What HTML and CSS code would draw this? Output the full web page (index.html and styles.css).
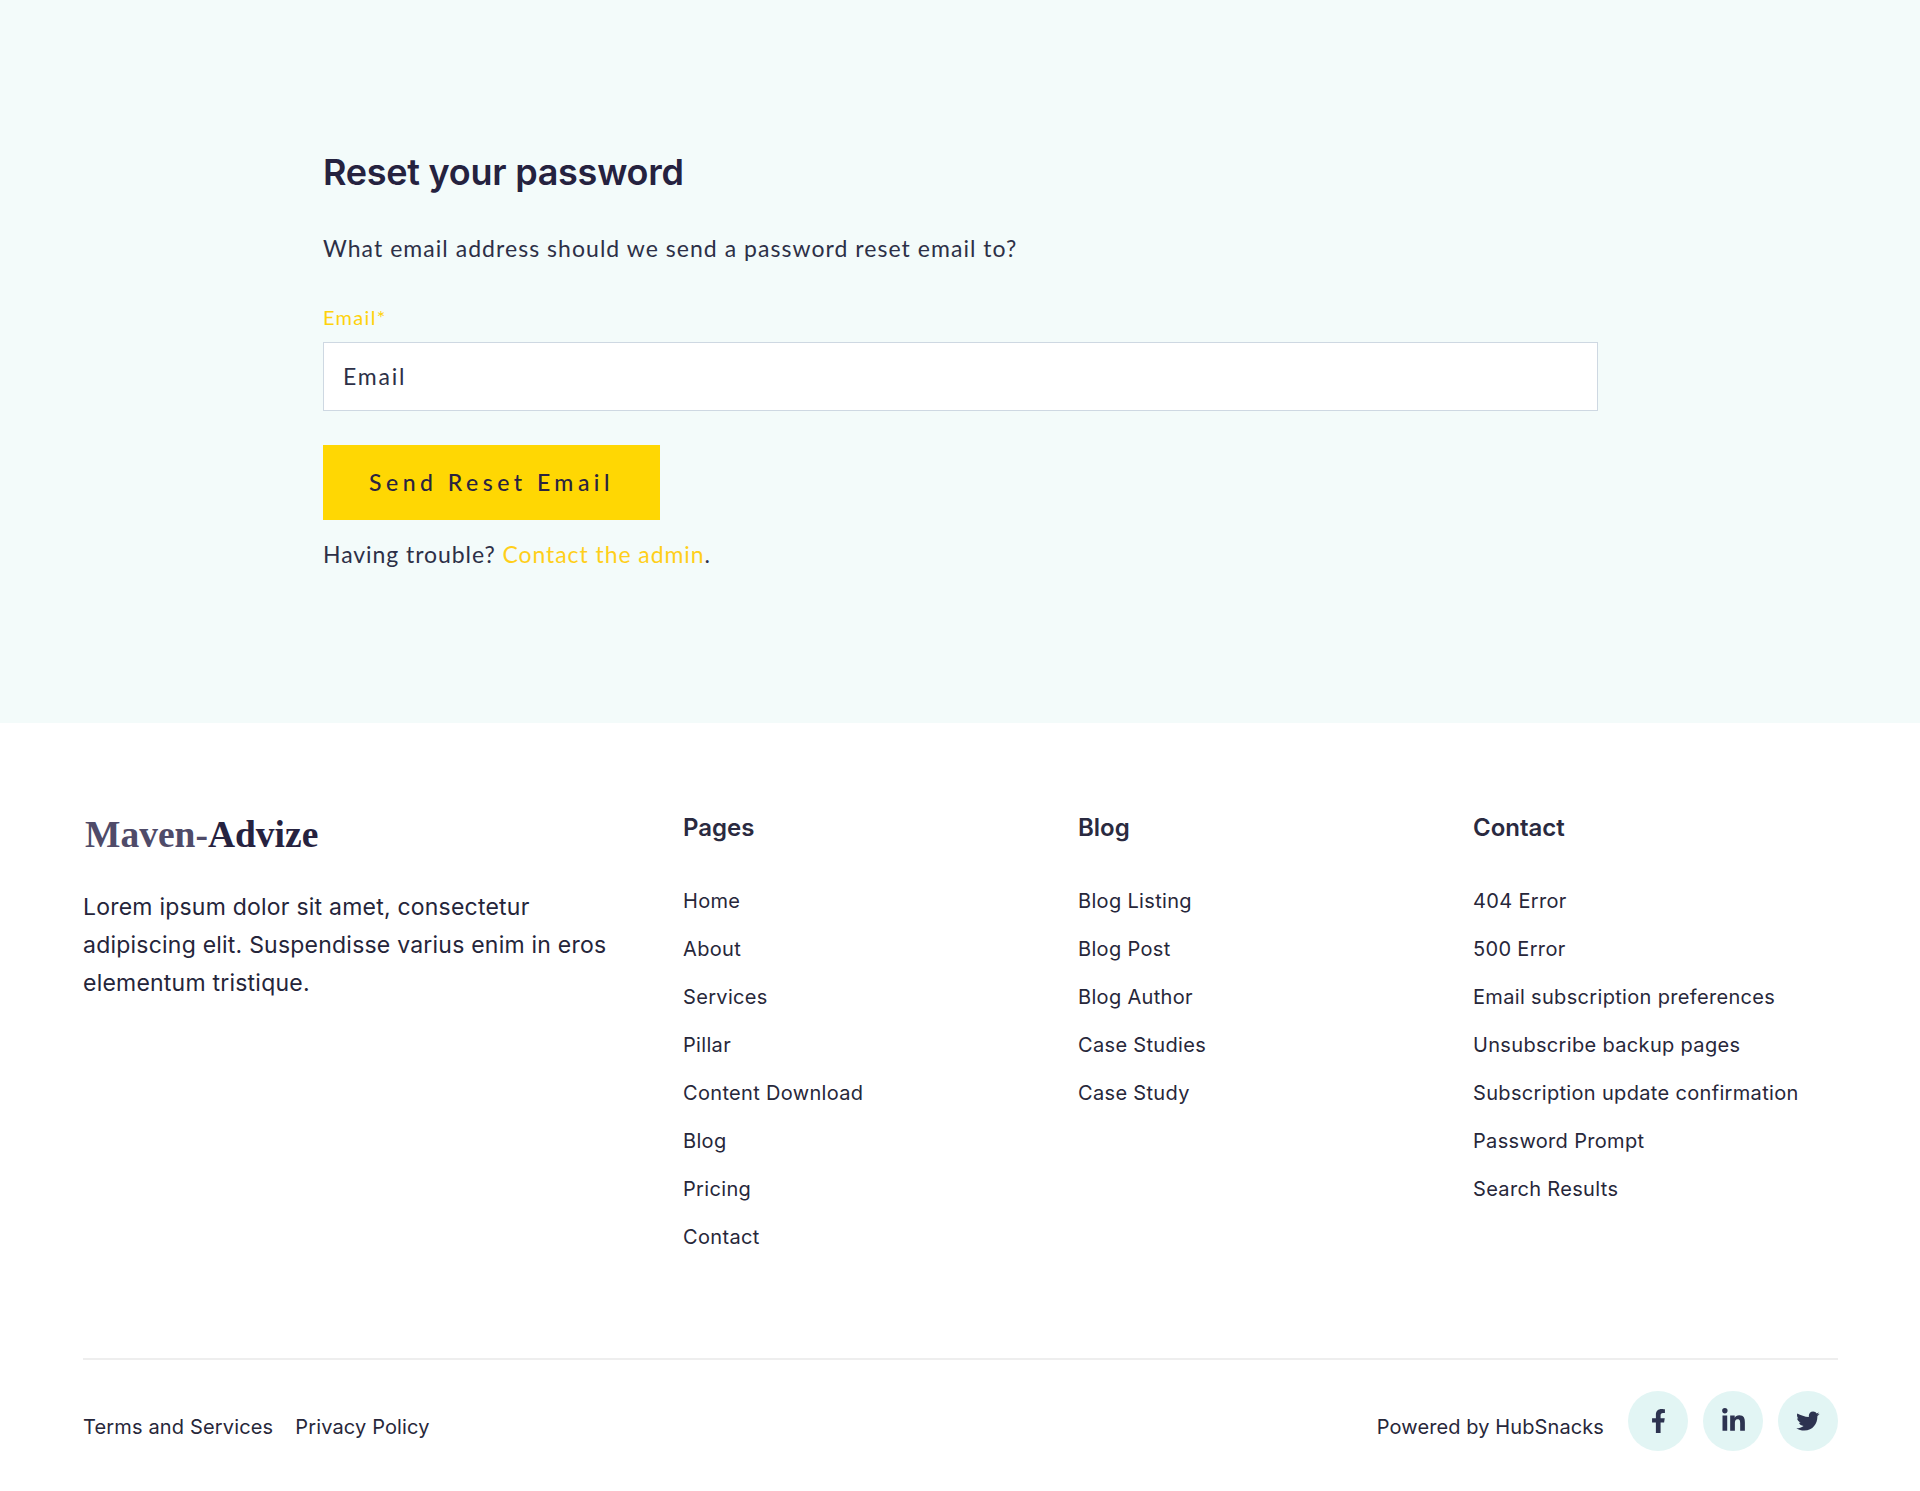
FILE: index.html
```html
<!DOCTYPE html>
<html lang="en">
<head>
<meta charset="utf-8">
<title>Reset your password</title>
<link rel="stylesheet" href="styles.css">
</head>
<body>
<main class="hero">
  <div class="hero-inner">
    <h1 class="title">Reset your password</h1>
    <p class="lead">What email address should we send a password reset email to?</p>
    <form class="form">
      <label class="label" for="email">Email*</label>
      <input class="input" id="email" type="email" placeholder="Email">
      <button class="button" type="button">Send Reset Email</button>
    </form>
    <p class="trouble">Having trouble? <a class="admin" href="#">Contact the admin</a>.</p>
  </div>
</main>
<footer class="footer">
  <div class="footer-top">
    <div class="brand">
      <div class="logo"><span class="logo-light">Maven-</span>Advize</div>
      <p class="about">Lorem ipsum dolor sit amet, consectetur adipiscing elit. Suspendisse varius enim in eros elementum tristique.</p>
    </div>
    <nav class="col">
      <h2 class="col-title">Pages</h2>
      <a class="link" href="#">Home</a>
      <a class="link" href="#">About</a>
      <a class="link" href="#">Services</a>
      <a class="link" href="#">Pillar</a>
      <a class="link" href="#">Content Download</a>
      <a class="link" href="#">Blog</a>
      <a class="link" href="#">Pricing</a>
      <a class="link" href="#">Contact</a>
    </nav>
    <nav class="col">
      <h2 class="col-title">Blog</h2>
      <a class="link" href="#">Blog Listing</a>
      <a class="link" href="#">Blog Post</a>
      <a class="link" href="#">Blog Author</a>
      <a class="link" href="#">Case Studies</a>
      <a class="link" href="#">Case Study</a>
    </nav>
    <nav class="col">
      <h2 class="col-title">Contact</h2>
      <a class="link" href="#">404 Error</a>
      <a class="link" href="#">500 Error</a>
      <a class="link" href="#">Email subscription preferences</a>
      <a class="link" href="#">Unsubscribe backup pages</a>
      <a class="link" href="#">Subscription update confirmation</a>
      <a class="link" href="#">Password Prompt</a>
      <a class="link" href="#">Search Results</a>
    </nav>
  </div>
  <div class="footer-bottom">
    <div class="legal">
      <a class="legal-link" href="#">Terms and Services</a>
      <a class="legal-link" href="#">Privacy Policy</a>
    </div>
    <div class="social">
      <span class="powered">Powered by HubSnacks</span>
      <a class="circle" href="#" aria-label="Facebook">
        <svg class="icon icon-f" viewBox="0 0 320 512"><path d="M279.14 288l14.22-92.66h-88.91v-60.13c0-25.35 12.42-50.06 52.24-50.06h40.42V6.26S260.43 0 225.36 0c-73.22 0-121.08 44.38-121.08 124.72v70.62H22.89V288h81.39v224h100.17V288z"/></svg>
      </a>
      <a class="circle" href="#" aria-label="LinkedIn">
        <svg class="icon icon-in" viewBox="0 0 448 512"><path d="M100.28 448H7.4V148.9h92.88zM53.79 108.1C24.09 108.1 0 83.5 0 53.8a53.79 53.79 0 0 1 107.58 0c0 29.7-24.1 54.3-53.79 54.3zM447.9 448h-92.68V302.4c0-34.7-.7-79.2-48.29-79.2-48.29 0-55.69 37.7-55.69 76.7V448h-92.78V148.9h89.08v40.8h1.3c12.4-23.5 42.69-48.3 87.88-48.3 94 0 111.28 61.9 111.28 142.3V448z"/></svg>
      </a>
      <a class="circle" href="#" aria-label="Twitter">
        <svg class="icon icon-tw" viewBox="48 43 73 60"><path d="M120 51C117 52 115 53 113 53C115 52 117 49 118 47C116 48 113 49 111 50C109 47 105 44 100 44C92 44 87 50 87 57L87 61C75 60 62 55 52 50C50 54 51 60 55 66L51 65C52 71 56 75 62 78L57 78C59 83 64 87 71 88C65 92 57 95 49 95C56 100 64 102 73 102C100 102 113 80 113 60L113 58C116 56 118 54 120 51Z"/></svg>
      </a>
    </div>
  </div>
</footer>
</body>
</html>
```

FILE: styles.css
```css
* { box-sizing: border-box; }
html, body { margin: 0; padding: 0; }
body { background: #fff; color: #2a2a44; font-family: "Inter", "Liberation Sans", sans-serif; }
a { text-decoration: none; color: inherit; }

.hero { background: #f3fbfa; height: 723px; padding: 148px 322px 0 323px; }
.title { margin: 0; font-family: "Inter", sans-serif; font-weight: 600; font-size: 36px; line-height: 48px; color: #25223f; letter-spacing: -0.26px; }
.lead { margin: 36px 0 0; font-family: "Lato", sans-serif; font-size: 23px; line-height: 32px; color: #2d3047; letter-spacing: 1.04px; }
.form { display: flex; flex-direction: column; align-items: flex-start; margin-top: 40px; }
.label { font-family: "Lato", sans-serif; font-size: 20px; line-height: 26px; color: #ffd20a; margin-bottom: 12px; letter-spacing: 1.3px; }
.input { width: 100%; height: 69px; border: 1px solid #ced8e2; background: #fff; padding: 0 19px 2px; font-family: "Lato", sans-serif; font-size: 23px; color: #2d3047; letter-spacing: 1.8px; border-radius: 0; outline: none; }
.input::placeholder { color: #2d3047; opacity: 1; }
.button { margin-top: 34px; width: 337px; height: 75px; border: 0; padding: 0 0 2px; background: #ffd703; font-family: "Lato", sans-serif; font-size: 23px; color: #2a2440; letter-spacing: 4.5px; font-weight: 500; }
.trouble { margin: 18px 0 0; font-family: "Lato", sans-serif; font-size: 23px; line-height: 32px; color: #2d3047; letter-spacing: 0.93px; }
.admin { color: #ffcf1a; }

.footer { padding: 90px 82px 0 83px; }
.footer-top { display: grid; grid-template-columns: 600px 395px 395px 1fr; padding-bottom: 85px; border-bottom: 2px solid #eeeeee; }
.logo { font-family: "Liberation Serif", serif; font-weight: 700; font-size: 37.5px; line-height: 42px; color: #26223f; padding-left: 2px; margin-top: 1px; }
.logo-light { color: #4f4b69; }
.about { margin: 32px 0 0; font-size: 23px; line-height: 38px; color: #25253a; width: 540px; letter-spacing: 0.22px; }
.col { display: flex; flex-direction: column; align-items: flex-start; }
.col-title { margin: 1px 0 47px; font-size: 24px; line-height: 28px; font-weight: 600; color: #2a2a40; }
.link { font-size: 20px; line-height: 24px; margin-bottom: 24px; color: #27273a; letter-spacing: 0.33px; }
.footer-bottom { display: flex; justify-content: space-between; align-items: center; padding: 31px 0 36px; }
.legal { display: flex; gap: 22px; font-size: 20px; color: #27273a; padding-top: 12px; letter-spacing: 0.15px; }
.social { display: flex; align-items: center; gap: 15px; }
.powered { font-size: 20px; color: #27273a; margin-right: 9px; padding-top: 12px; letter-spacing: 0.1px; }
.circle { width: 60px; height: 60px; border-radius: 50%; background: #e2f5f4; display: flex; align-items: center; justify-content: center; }
.icon { fill: #2d3350; }
.icon-f { height: 24px; width: 15px; }
.icon-in { height: 26px; width: 23px; }
.icon-tw { height: 20px; width: 24px; }
```
